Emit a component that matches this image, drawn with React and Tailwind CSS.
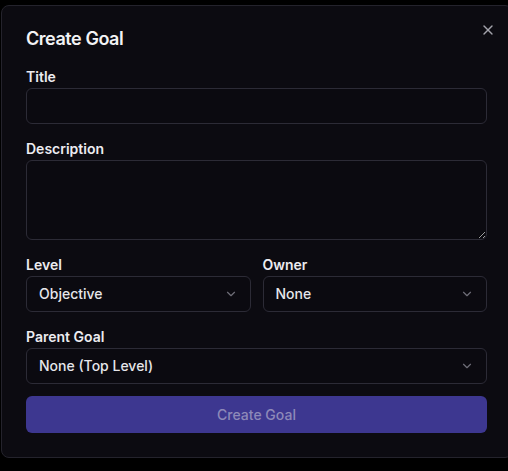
import React from 'react';
import { X, ChevronDown } from 'lucide-react';

const Label = ({ children }) => (
  <label className="block text-sm font-semibold leading-none text-[#ececf0] mb-1">{children}</label>
);

const Select = ({ value }) => (
  <button
    type="button"
    className="flex h-9 w-full items-center justify-between rounded-md border border-[#2c2b36] bg-[#0b0a10] px-3 text-sm font-medium text-[#e6e6ea]"
  >
    <span>{value}</span>
    <ChevronDown size={14} className="text-[#6f6e78]" />
  </button>
);

const App = () => (
  <div className="h-[471px] w-[508px] overflow-hidden bg-black pl-[1px] pt-[5px]" style={{ fontFamily: 'Inter, "Noto Sans", sans-serif' }}>
    <div className="relative w-[512px] rounded-lg border border-[#24232c] bg-[#0c0b11] py-6 pl-6 pr-[25px]">
      <button type="button" className="absolute right-4 top-4 text-[#a3a3ab]">
        <X size={16} />
      </button>
      <h2 className="mb-[22px] text-lg font-semibold leading-none tracking-tight text-[#f3f3f5]">Create Goal</h2>

      <div className="flex flex-col gap-[18px]">
        <div>
          <Label>Title</Label>
          <input className="h-9 w-full rounded-md border border-[#2c2b36] bg-[#0b0a10] px-3 text-sm text-white outline-none" />
        </div>
        <div>
          <Label>Description</Label>
          <textarea className="block h-20 w-full rounded-md border border-[#2c2b36] bg-[#0b0a10] px-3 py-2 text-sm text-white outline-none [color-scheme:dark]" />
        </div>
        <div className="grid grid-cols-2 gap-3">
          <div>
            <Label>Level</Label>
            <Select value="Objective" />
          </div>
          <div>
            <Label>Owner</Label>
            <Select value="None" />
          </div>
        </div>
        <div>
          <Label>Parent Goal</Label>
          <Select value="None (Top Level)" />
        </div>
      </div>

      <button
        type="button"
        disabled
        className="mt-3 h-[37px] w-full rounded-md bg-[#3d3790] text-sm font-medium text-[#8d89b9]"
      >
        Create Goal
      </button>
    </div>
  </div>
);

export default App;
